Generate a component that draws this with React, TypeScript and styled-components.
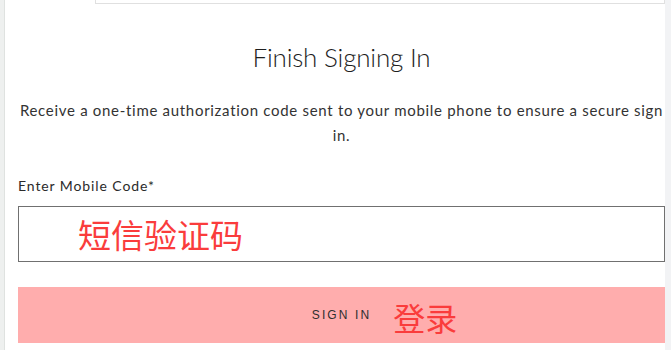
import React from "react";
import styled, { createGlobalStyle } from "styled-components";

const GlobalStyle = createGlobalStyle`
  html, body {
    margin: 0;
    padding: 0;
    background: #ffffff;
    overflow: hidden;
  }
  body {
    font-family: "Lato", "Noto Sans CJK SC", sans-serif;
    color: #2b2b2b;
  }
`;

const Page = styled.div`
  display: flex;
  width: 671px;
  height: 350px;
`;

const LeftRail = styled.div`
  width: 4px;
  background: #eef0ef;
  border-right: 1px solid #dfe2e0;
`;

const RightRail = styled.div`
  width: 6px;
  background: #f2f3f5;
`;

const Main = styled.main`
  flex: 1;
  display: flex;
  flex-direction: column;
  padding-left: 13px;
`;

const TopBox = styled.div`
  margin-left: 77px;
  height: 3px;
  border: 1px solid #e0e0e0;
  border-top: none;
`;

const Title = styled.h1`
  margin: 36px 0 0;
  font-family: "Lato", sans-serif;
  font-weight: 300;
  font-size: 26px;
  line-height: 34px;
  text-align: center;
  color: #1e1e1e;
  letter-spacing: -0.2px;
`;

const Description = styled.p`
  margin: 24px 0 0;
  padding: 0;
  font-size: 15px;
  line-height: 25px;
  letter-spacing: 0.7px;
  text-align: center;
  color: #333;
`;

const Label = styled.label`
  margin-top: 29px;
  font-size: 14px;
  line-height: 18px;
  letter-spacing: 0.9px;
  color: #2b2b2b;
`;

const CodeInput = styled.input`
  box-sizing: border-box;
  margin-top: 11px;
  width: 100%;
  height: 56px;
  border: 1px solid #707070;
  padding: 0 0 0 59px;
  font-size: 33px;
  font-family: "Noto Sans CJK SC", sans-serif;
  outline: none;
  background: #fff;

  &::placeholder {
    color: #fa3c3c;
    opacity: 1;
  }
`;

const SignInButton = styled.button`
  box-sizing: border-box;
  margin-top: 25px;
  width: 100%;
  height: 56px;
  border: none;
  background: #ffadad;
  display: flex;
  align-items: center;
  justify-content: center;
  cursor: pointer;
`;

const ButtonLabel = styled.span`
  position: relative;
  font-family: "Liberation Sans", sans-serif;
  font-size: 12px;
  letter-spacing: 2.1px;
  color: #2f2f2f;
`;

const Annotation = styled.span`
  position: absolute;
  left: calc(100% + 22px);
  top: 50%;
  transform: translateY(-46%);
  white-space: nowrap;
  font-family: "Noto Sans CJK SC", sans-serif;
  font-size: 32px;
  letter-spacing: 0;
  color: #fa3c3c;
`;

export default function App() {
  return (
    <>
      <GlobalStyle />
      <Page>
        <LeftRail />
        <Main>
          <TopBox />
          <Title>Finish Signing In</Title>
          <Description>
            Receive a one-time authorization code sent to your mobile phone to ensure a secure sign in.
          </Description>
          <Label htmlFor="mobile-code">Enter Mobile Code*</Label>
          <CodeInput id="mobile-code" placeholder="短信验证码" />
          <SignInButton>
            <ButtonLabel>
              SIGN IN
              <Annotation>登录</Annotation>
            </ButtonLabel>
          </SignInButton>
        </Main>
        <RightRail />
      </Page>
    </>
  );
}
